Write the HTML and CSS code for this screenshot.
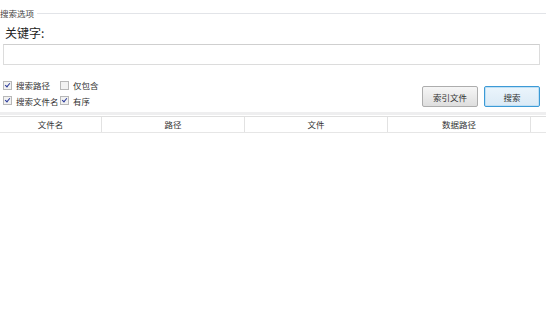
FILE: index.html
```html
<!DOCTYPE html>
<html lang="zh">
<head>
  <meta charset="UTF-8">
  <title>搜索</title>
  <link rel="stylesheet" href="styles.css">
</head>
<body>
  <div class="group">
    <div class="group-title">
      <span>搜索选项</span>
      <div class="group-line"></div>
    </div>
    <div class="keyword-label">关键字:</div>
    <input class="keyword" type="text">
    <div class="options">
      <div class="checks">
        <label class="check"><span class="box on"></span>搜索路径</label>
        <label class="check"><span class="box"></span>仅包含</label>
        <label class="check"><span class="box on"></span>搜索文件名</label>
        <label class="check"><span class="box on"></span>有序</label>
      </div>
      <div class="buttons">
        <button class="btn">索引文件</button>
        <button class="btn default">搜索</button>
      </div>
    </div>
  </div>
  <div class="sep"></div>
  <div class="table-head">
    <div class="col c1">文件名</div>
    <div class="col c2">路径</div>
    <div class="col c3">文件</div>
    <div class="col c4">数据路径</div>
    <div class="col c5"></div>
  </div>
</body>
</html>
```

FILE: styles.css
```css
body {
  margin: 0;
  background: #ffffff;
  font-family: "Noto Sans CJK SC", "Liberation Sans", sans-serif;
  color: #333;
  font-size: 8.5px;
}
.group {
  padding: 7px 6px 0 0;
}
.group-title {
  display: flex;
  align-items: center;
  height: 12px;
  color: #444;
}
.group-title span {
  padding-right: 3px;
}
.group-line {
  flex: 1;
  height: 1px;
  background: #e2e4e8;
  margin-right: -6px;
}
.keyword-label {
  font-size: 12px;
  margin: 5px 0 0 5px;
  height: 17px;
  line-height: 17px;
  color: #222;
}
.keyword {
  display: block;
  box-sizing: border-box;
  width: 537px;
  height: 21px;
  margin: 3px 0 0 3px;
  border: 1px solid #dcdcdc;
  border-top-color: #cfcfcf;
  background: #fff;
}
.options {
  display: flex;
  justify-content: space-between;
  margin-top: 14px;
}
.checks {
  display: grid;
  grid-template-columns: 57px auto;
  row-gap: 3px;
  padding-left: 3px;
}
.check {
  display: flex;
  align-items: center;
  height: 12px;
  color: #333;
}
.box {
  width: 7px;
  height: 7px;
  border: 1px solid #b8b8b8;
  background: #f2f2f2;
  margin-right: 4px;
  position: relative;
}
.box.on::after {
  content: "";
  position: absolute;
  left: 2px;
  top: 0;
  width: 2px;
  height: 4px;
  border-right: 1.5px solid #2b3a9a;
  border-bottom: 1.5px solid #2b3a9a;
  transform: rotate(40deg);
}
.buttons {
  display: flex;
  gap: 6px;
  margin-top: 7px;
}
.btn {
  width: 56px;
  height: 21px;
  font-family: inherit;
  font-size: 8.5px;
  color: #333;
  border: 1px solid #adadad;
  border-radius: 2px;
  background: linear-gradient(#f6f6f6, #dedede);
  padding: 0;
}
.btn.default {
  border-color: #3c9ad6;
  background: linear-gradient(#ebf5fc, #dbeaf6);
  box-shadow: inset 0 0 0 1px #bfe0f5;
}
.sep {
  height: 3px;
  margin-top: 5px;
  background: #eeeeef;
}
.table-head {
  display: flex;
  margin-top: 1px;
  height: 15px;
  border-top: 1px solid #dfdfdf;
  border-bottom: 1px solid #e6e6e6;
}
.col {
  text-align: center;
  line-height: 15px;
  border-right: 1px solid #e2e2e2;
  color: #333;
}
.c1 { width: 101px; }
.c2 { width: 142px; }
.c3 { width: 142px; }
.c4 { width: 142px; }
.c5 { flex: 1; border-right: none; }
```
